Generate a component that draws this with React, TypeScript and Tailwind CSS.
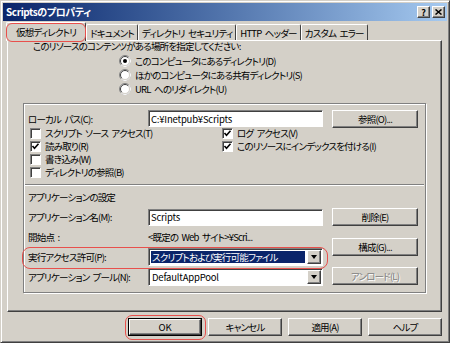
import type { ReactNode } from 'react';

const raised =
  'border border-t-white border-l-white border-r-[#404040] border-b-[#404040] shadow-[inset_-1px_-1px_0_#808080]';
const sunken =
  'border border-t-[#808080] border-l-[#808080] border-r-white border-b-white shadow-[inset_1px_1px_0_#404040]';

function Btn({ children, disabled, className = '' }: { children: ReactNode; disabled?: boolean; className?: string }) {
  return (
    <div
      className={`${raised} bg-[#d4d0c8] flex items-center justify-center shrink-0 ${
        disabled ? 'text-[#808080] [text-shadow:1px_1px_0_#fff]' : 'text-black'
      } ${className}`}
    >
      {children}
    </div>
  );
}

function Check({ checked, label }: { checked?: boolean; label: string }) {
  return (
    <div className="flex items-center h-[13px]">
      <div className={`${sunken} w-[11px] h-[11px] bg-white shrink-0 flex items-center justify-center`}>
        {checked && (
          <svg width="9" height="9" viewBox="0 0 9 9">
            <path d="M1.5 4 L3.5 6.2 L7.5 1.8" stroke="#000" strokeWidth="1.6" fill="none" />
          </svg>
        )}
      </div>
      <span className="ml-[4px] whitespace-nowrap leading-[11px]">{label}</span>
    </div>
  );
}

function Radio({ checked, label }: { checked?: boolean; label: string }) {
  return (
    <div className="flex items-center h-[14px]">
      <svg width="12" height="12" viewBox="0 0 12 12" className="shrink-0">
        <circle cx="6" cy="6" r="5.5" fill="#fff" stroke="#808080" />
        <path d="M9.9 2.1 A5.5 5.5 0 0 1 2.1 9.9" stroke="#fff" fill="none" />
        <path d="M2.8 9.2 A4.5 4.5 0 0 1 9.2 2.8" stroke="#404040" fill="none" />
        <path d="M9.2 2.8 A4.5 4.5 0 0 1 2.8 9.2" stroke="#d4d0c8" fill="none" />
        {checked && <circle cx="6" cy="6" r="2" fill="#000" />}
      </svg>
      <span className="ml-[4px] whitespace-nowrap">{label}</span>
    </div>
  );
}

function Select({ value, selected, latin }: { value: string; selected?: boolean; latin?: boolean }) {
  return (
    <div className={`${sunken} w-[175px] h-[18px] bg-white flex items-center pl-[2px] pr-[1px]`}>
      <div
        className={`flex-1 h-[12px] flex items-center pl-[1px] whitespace-nowrap overflow-hidden ${
          selected ? 'bg-[#0a246a] text-white' : 'text-black'
        } ${latin ? 'tracking-[-0.2px]' : ''}`}
      >
        {value}
      </div>
      <div className={`${raised} w-[14px] h-[14px] ml-[2px] bg-[#d4d0c8] flex items-center justify-center`}>
        <div className="w-0 h-0 border-x-[3.5px] border-x-transparent border-t-[4px] border-t-black" />
      </div>
    </div>
  );
}

function Field({ value }: { value: string }) {
  return (
    <div
      className={`${sunken} w-[175px] h-[17px] bg-white flex items-center px-[2px] whitespace-nowrap overflow-hidden tracking-[-0.2px]`}
    >
      {value}
    </div>
  );
}

const tabs = ['ドキュメント', 'ディレクトリ セキュリティ', 'HTTP ヘッダー', 'カスタム エラー'];

export default function App() {
  return (
    <div className="w-[450px] h-[343px] bg-[#d4d0c8] border border-t-[#d4d0c8] border-l-[#d4d0c8] border-r-[#404040] border-b-[#404040] shadow-[inset_1px_1px_0_#fff,inset_-1px_-1px_0_#808080] p-[2px] flex flex-col overflow-hidden font-['Noto_Sans_CJK_JP',sans-serif] text-[9.5px] tracking-[-0.8px] [word-spacing:2px] leading-[12px] text-black [font-feature-settings:'palt']">
      {/* title bar */}
      <div className="h-[18px] shrink-0 bg-gradient-to-r from-[#0a246a] to-[#a6caf0] flex items-center pl-[3px] pr-[2px]">
        <span className="text-white font-bold text-[10px] tracking-[-0.4px]">Scriptsのプロパティ</span>
        <div className="ml-auto flex items-center gap-[2px]">
          <Btn className="w-[13px] h-[12px] text-[9px] font-bold leading-none tracking-normal">?</Btn>
          <Btn className="w-[13px] h-[12px]">
            <svg width="7" height="6" viewBox="0 0 7 6">
              <path d="M0.5 0.5 L6.5 5.5 M6.5 0.5 L0.5 5.5" stroke="#000" strokeWidth="1.5" />
            </svg>
          </Btn>
        </div>
      </div>

      {/* tabs */}
      <div className="h-[18px] mt-[1px] shrink-0 flex items-end pl-[3px]">
        <div className="relative z-10 -mb-px h-[19px] px-[9px] bg-[#d4d0c8] border border-b-0 border-t-white border-l-white border-r-[#404040] rounded-t-[2px] flex items-center">
          仮想ディレクトリ
          <div className="absolute -inset-x-[1px] top-0 -bottom-[1px] border border-[#e8504c] rounded-[6px]" />
        </div>
        {tabs.map((t) => (
          <div
            key={t}
            className="h-[16px] px-[3px] border border-b-0 border-t-white border-l-white border-r-[#404040] rounded-t-[2px] flex items-center whitespace-nowrap"
          >
            {t}
          </div>
        ))}
      </div>

      {/* panel */}
      <div className={`${raised} ml-[4px] w-[435px] h-[272px] shrink-0 flex flex-col`}>
        <div className="ml-[25px] h-[12px] -mt-[1px]">このリソースのコンテンツがある場所を指定してください:</div>
        <div className="ml-[111px] mt-[2px] flex flex-col">
          <Radio checked label="このコンピュータにあるディレクトリ(D)" />
          <Radio label="ほかのコンピュータにある共有ディレクトリ(S)" />
          <Radio label="URL へのリダイレクト(U)" />
        </div>

        {/* group box */}
        <div className="relative ml-[15px] mt-[7px] w-[403px] h-[190px] border border-[#808080] shadow-[1px_1px_0_#fff,inset_1px_1px_0_#fff] flex flex-col pt-[6px]">
          <div className="flex items-center h-[17px] pl-[4px]">
            <span className="w-[120px]">ローカル パス(C):</span>
            <Field value="C:¥Inetpub¥Scripts" />
            <Btn className="w-[86px] h-[18px] ml-[9px]">参照(O)...</Btn>
          </div>
          <div className="flex pl-[6px]">
            <div className="w-[192px] flex flex-col">
              <Check label="スクリプト ソース アクセス(T)" />
              <Check checked label="読み取り(R)" />
              <Check label="書き込み(W)" />
              <Check label="ディレクトリの参照(B)" />
            </div>
            <div className="flex flex-col">
              <Check checked label="ログ アクセス(V)" />
              <Check checked label="このリソースにインデックスを付ける(I)" />
            </div>
          </div>

          <div className="mt-[5px] mx-[1px] h-[2px] border-t border-t-[#808080] border-b border-b-white" />
          <div className="mt-[5px] pl-[4px] h-[12px]">アプリケーションの設定</div>

          <div className="flex mt-[4px] pl-[4px]">
            <div className="flex flex-col">
              <div className="flex items-center h-[20px]">
                <span className="w-[120px]">アプリケーション名(M):</span>
                <Field value="Scripts" />
              </div>
              <div className="flex items-center h-[20px]">
                <span className="w-[120px]">開始点 :</span>
                <span>&lt;既定の Web サイト&gt;¥Scri...</span>
              </div>
              <div className="flex items-center h-[20px]">
                <span className="w-[120px]">実行アクセス許可(P):</span>
                <Select selected value="スクリプトおよび実行可能ファイル" />
              </div>
              <div className="flex items-center h-[20px]">
                <span className="w-[120px]">アプリケーション プール(N):</span>
                <Select latin value="DefaultAppPool" />
              </div>
            </div>
            <div className="flex flex-col ml-[9px] pt-[1px]">
              <Btn className="w-[86px] h-[18px]">削除(E)</Btn>
              <Btn className="w-[86px] h-[18px] mt-[12px]">構成(G)...</Btn>
              <Btn disabled className="w-[86px] h-[18px] mt-[11px]">アンロード(L)</Btn>
            </div>
          </div>

          <div className="absolute -left-[2px] top-[143px] w-[306px] h-[22px] border border-[#e8504c] rounded-[8px]" />
        </div>
      </div>

      {/* buttons */}
      <div className="ml-[4px] w-[435px] mt-[6px] flex justify-end gap-[6px]">
        <div className="relative">
          <div className="border border-black">
            <Btn className="w-[72px] h-[16px] tracking-normal">OK</Btn>
          </div>
          <div className="absolute -left-[3px] -right-[4px] -top-[3px] -bottom-[4px] border border-[#e8504c] rounded-[7px]" />
        </div>
        <Btn className="w-[74px] h-[18px]">キャンセル</Btn>
        <Btn className="w-[74px] h-[18px]">適用(A)</Btn>
        <Btn className="w-[74px] h-[18px]">ヘルプ</Btn>
      </div>
    </div>
  );
}
